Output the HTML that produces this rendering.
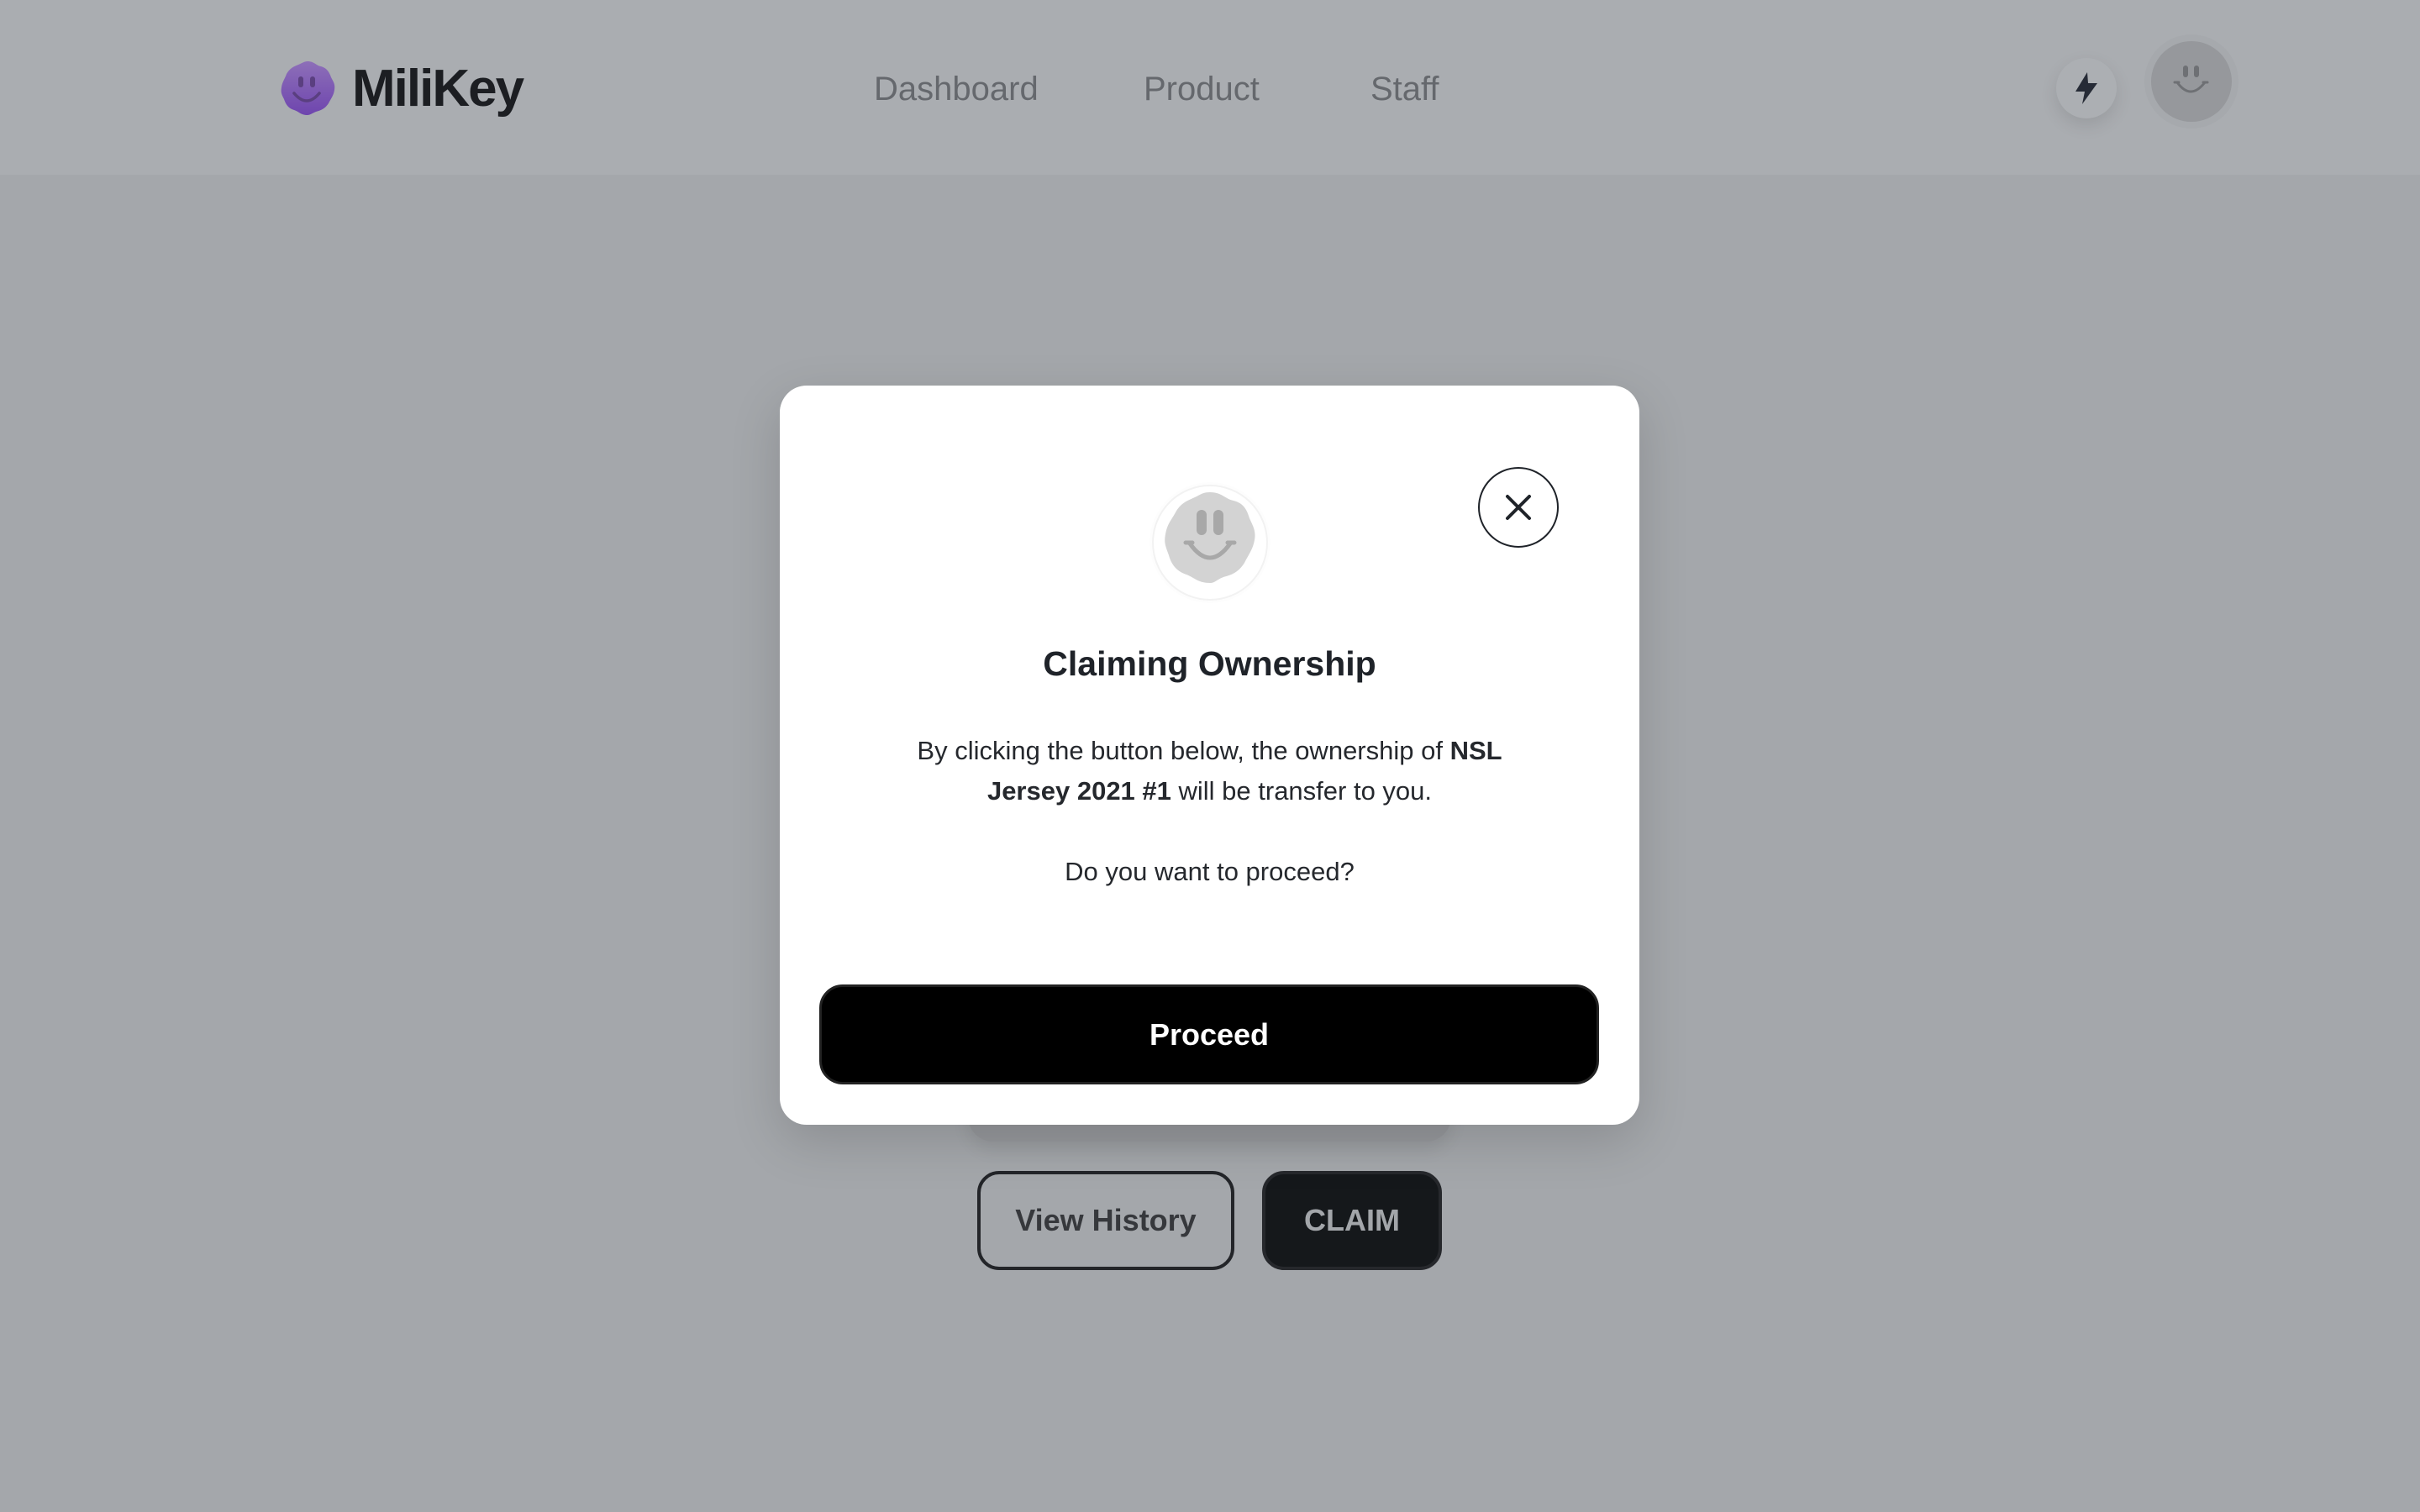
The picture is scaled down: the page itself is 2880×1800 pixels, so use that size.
<!DOCTYPE html>
<html><head><meta charset="utf-8"><style>
*{margin:0;padding:0;box-sizing:border-box}
body{width:2880px;height:1800px;background:#a4a7ab;font-family:"Liberation Sans",sans-serif;position:relative;overflow:hidden}
.hdr{position:absolute;left:0;top:0;width:2880px;height:208px;background:#aaadb1}
.abs{position:absolute}
.nav{position:absolute;top:84px;font-size:40px;color:#65686d}
.modal{position:absolute;left:928px;top:459px;width:1023px;height:880px;background:#fff;border-radius:32px;box-shadow:0 20px 60px rgba(0,0,0,.15)}
.t{position:absolute;left:0;width:1023px;text-align:center;color:#1f2329}
</style></head><body>
<div class="hdr"></div>
<svg class="abs" style="left:328px;top:67px" width="76" height="76" viewBox="0 0 76 76">
<defs><linearGradient id="g" x1="0" y1="0" x2="0" y2="1"><stop offset="0" stop-color="#8d6fb8"/><stop offset="1" stop-color="#6e45ae"/></linearGradient></defs>
<path d="M38 6 C46 6 48 11 54 12 C61 14 64 19 66 25 C69 31 71 33 70 40 C69 47 66 50 63 56 C59 62 55 64 48 66 C43 68 41 70 38 70 C30 70 28 66 22 64 C15 62 12 57 10 51 C7 45 6 43 7 37 C8 30 11 27 13 21 C17 14 22 12 27 10 C32 8 34 6 38 6Z" fill="url(#g)"/>
<rect x="27" y="24" width="6" height="13" rx="3" fill="#5a3f80"/><rect x="41" y="24" width="6" height="13" rx="3" fill="#5a3f80"/>
<path d="M22 44 Q37 62 52 44" stroke="#5a3f80" stroke-width="3.5" fill="none" stroke-linecap="round"/>
</svg>
<div class="abs" style="left:419px;top:70px;font-size:62px;font-weight:bold;color:#1c1e22;letter-spacing:-2px">MiliKey</div>
<div class="nav" style="left:1040px">Dashboard</div>
<div class="nav" style="left:1361px">Product</div>
<div class="nav" style="left:1631px">Staff</div>
<div class="abs" style="left:2447px;top:69px;width:72px;height:72px;border-radius:50%;background:#acafb3;box-shadow:0 8px 20px rgba(0,0,0,.1)"></div>
<svg class="abs" style="left:2466px;top:84px" width="34" height="42" viewBox="0 0 34 42"><path d="M18 2 L4 25 H15 L12 40 L30 15 H19 Z" fill="#262b36"/></svg>
<div class="abs" style="left:2560px;top:49px;width:96px;height:96px;border-radius:50%;background:#96989c;box-shadow:0 0 0 8px #a6a9ad"></div>
<svg class="abs" style="left:2586px;top:78px" width="44" height="40" viewBox="0 0 44 40"><rect x="12" y="0" width="6" height="14" rx="3" fill="#6e7074"/><rect x="25" y="0" width="6" height="14" rx="3" fill="#6e7074"/><path d="M2 20 H7 M36 20 H41 M5 20 Q21 42 38 20" stroke="#6e7074" stroke-width="3" fill="none" stroke-linecap="round"/></svg>

<div class="abs" style="left:1152px;top:1200px;width:575px;height:159px;background:#96989c;border-radius:0 0 30px 30px;box-shadow:0 10px 20px rgba(0,0,0,.08)"></div>
<div class="abs" style="left:1163px;top:1394px;width:306px;height:118px;border:4px solid #232529;border-radius:26px;font-size:36px;font-weight:bold;color:#36383c;text-align:center;line-height:110px">View History</div>
<div class="abs" style="left:1502px;top:1394px;width:214px;height:118px;border:4px solid #26282c;background:#15181b;border-radius:26px;font-size:36px;font-weight:bold;color:#a3a6aa;text-align:center;line-height:110px">CLAIM</div>

<div class="modal">
<svg class="abs" style="left:440px;top:115px" width="144" height="144" viewBox="0 0 144 144">
<circle cx="72" cy="72" r="72" fill="#fdfdfd"/><circle cx="72" cy="72" r="68" fill="#fff" stroke="#f2f2f2" stroke-width="2"/>
<path d="M72 12 C86 12 90 20 100 22 C112 25 116 33 119 43 C123 52 127 58 125 69 C123 80 118 86 113 96 C106 107 99 110 88 113 C80 116 78 120 72 120 C58 120 54 114 44 110 C32 106 26 98 23 87 C19 76 17 72 19 62 C21 50 26 45 31 36 C37 25 45 22 54 18 C62 14 64 12 72 12Z" fill="#d3d3d3"/>
<rect x="56" y="33" width="12" height="30" rx="6" fill="#a8a8a8"/><rect x="76" y="33" width="12" height="30" rx="6" fill="#a8a8a8"/>
<path d="M43 72 H51 M93 72 H101 M48 73 Q72 107 96 73" stroke="#a8a8a8" stroke-width="5" fill="none" stroke-linecap="round"/>
</svg>
<div class="abs" style="left:831px;top:97px;width:96px;height:96px;border-radius:50%;border:2px solid #1f2329"></div>
<svg class="abs" style="left:860px;top:126px" width="38" height="38" viewBox="0 0 38 38"><path d="M6 6 L32 32 M32 6 L6 32" stroke="#1f2329" stroke-width="4" stroke-linecap="round"/></svg>
<div class="t" style="top:308px;font-size:41px;font-weight:bold">Claiming Ownership</div>
<div class="t" style="top:411px;font-size:31px;line-height:48px;color:#25282d">By clicking the button below, the ownership of <b>NSL</b><br><b>Jersey 2021 #1</b> will be transfer to you.</div>
<div class="t" style="top:555px;font-size:31px;line-height:48px;color:#25282d">Do you want to proceed?</div>
<div class="abs" style="left:47px;top:713px;width:928px;height:119px;background:#000;border-radius:28px;border:3px solid #222;color:#fff;font-size:36px;font-weight:bold;text-align:center;line-height:113px">Proceed</div>
</div>
</body></html>
